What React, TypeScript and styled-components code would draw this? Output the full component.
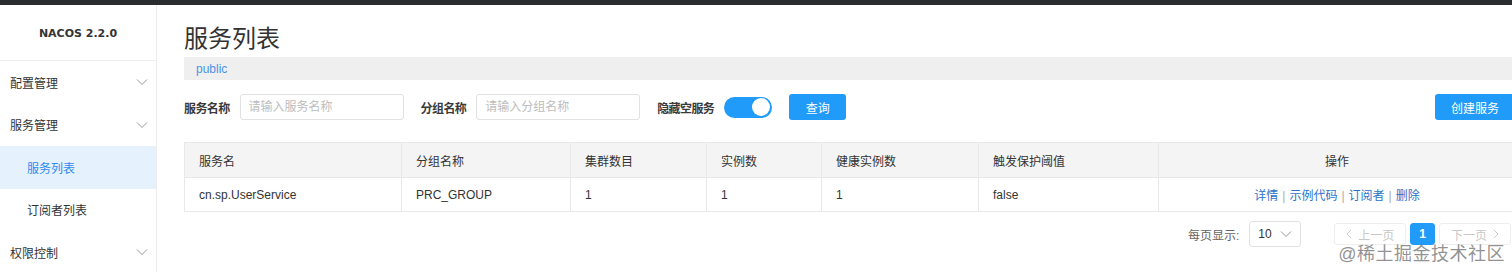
import styled, { createGlobalStyle } from 'styled-components';

const GlobalStyle = createGlobalStyle`
    html, body {
        margin : 0;
        padding : 0;
        background : #fff;
        overflow : hidden;
    }
    body {
        font-family : "Liberation Sans", "Noto Sans CJK SC", sans-serif;
        font-size : 12px;
        color : #333;
    }
    * {
        box-sizing : border-box;
    }
`;

const TopBar = styled.div`
    height : 5px;
    background : #2b2c30;
`;

const Layout = styled.div`
    display : flex;
    height : 267px;
`;

const Sidebar = styled.aside`
    width : 157px;
    flex-shrink : 0;
    border-right : 1px solid #ececec;
`;

const Logo = styled.div`
    height : 56px;
    display : flex;
    align-items : center;
    justify-content : center;
    font-family : "DejaVu Sans", sans-serif;
    font-weight : bold;
    font-size : 11px;
    color : #333;
    border-bottom : 1px solid #eee;
    padding-top : 1px;
`;

const MenuItem = styled.div<{ $sub?: boolean; $active?: boolean }>`
    height : 42.5px;
    display : flex;
    align-items : center;
    justify-content : space-between;
    padding : 0 8px 0 ${p => (p.$sub ? '27px' : '10px')};
    font-size : 12px;
    color : ${p => (p.$active ? '#2f8cf0' : '#333')};
    background : ${p => (p.$active ? '#e5f1fc' : 'transparent')};
`;

const Chevron = () => (
    <svg width="12" height="8" viewBox="0 0 12 8">
        <polyline points="1,1.5 6,6.5 11,1.5" fill="none" stroke="#999" strokeWidth="1" />
    </svg>
);

const Main = styled.main`
    width : 1358px;
    flex-shrink : 0;
    padding : 0 0 0 27px;
    position : relative;
`;

const Title = styled.h1`
    margin : 0;
    height : 52px;
    display : flex;
    align-items : center;
    font-size : 24px;
    font-weight : normal;
    color : #333;
    padding-top : 11px;
`;

const Crumb = styled.div`
    height : 23px;
    background : #efefef;
    display : flex;
    align-items : center;
    padding-left : 12px;
    color : #4a94e8;
    font-size : 12px;
`;

const FilterRow = styled.div`
    display : flex;
    align-items : center;
    margin-top : 14px;
    height : 26px;
`;

const Label = styled.span`
    font-weight : bold;
    color : #3a3a3a;
    font-size : 12px;
    letter-spacing : -0.6px;
    margin-right : 10px;
`;

const Input = styled.input`
    width : 164px;
    height : 26px;
    border : 1px solid #e2e2e2;
    border-radius : 3px;
    padding : 0 8px;
    font-size : 12px;
    font-family : inherit;
    margin-right : 17px;
    outline : none;

    &::placeholder {
        color : #bdbdbd;
    }
`;

const Switch = styled.div`
    width : 48px;
    height : 21px;
    border-radius : 11px;
    background : #209bfa;
    position : relative;
    margin-right : 17px;

    &::after {
        content : '';
        position : absolute;
        right : 2px;
        top : 1.5px;
        width : 18px;
        height : 18px;
        border-radius : 50%;
        background : #fff;
    }
`;

const Button = styled.button<{ $wide?: boolean }>`
    height : 26px;
    width : ${p => (p.$wide ? '80px' : '57px')};
    border : none;
    border-radius : 3px;
    background : #209bfa;
    color : #fff;
    font-size : 12px;
    font-family : inherit;
    padding : 0;
    margin-left : ${p => (p.$wide ? 'auto' : '0')};
`;

const Table = styled.table`
    margin-top : 22px;
    width : 1331px;
    border-collapse : collapse;
    table-layout : fixed;
    font-size : 12px;

    th, td {
        border : 1px solid #e8e8e8;
        padding : 0 14px;
        text-align : left;
        font-weight : normal;
        color : #333;
        white-space : nowrap;
    }
    th {
        height : 35px;
        background : #f4f4f5;
    }
    td {
        height : 34px;
    }
    .center {
        text-align : center;
    }
`;

const Link = styled.a`
    color : #2b73c9;
    text-decoration : none;
`;

const Sep = styled.span`
    color : #aaa;
    margin : 0 4px;
`;

const Pager = styled.div`
    display : flex;
    align-items : center;
    justify-content : flex-end;
    margin-top : 9px;
    margin-right : 4px;
    height : 26px;
`;

const PagerLabel = styled.span`
    color : #666;
    margin-right : 10px;
`;

const Select = styled.div`
    width : 52px;
    height : 26px;
    border : 1px solid #e2e2e2;
    border-radius : 3px;
    display : flex;
    align-items : center;
    justify-content : space-between;
    padding : 0 8px;
    color : #333;
    margin-right : 29px;
`;

const PageBtn = styled.div<{ $active?: boolean }>`
    height : 22px;
    padding : 0 ${p => (p.$active ? '8px' : '11px')};
    display : flex;
    align-items : center;
    gap : 6px;
    border : 1px solid ${p => (p.$active ? '#209bfa' : '#eee')};
    border-radius : 3px;
    background : ${p => (p.$active ? '#209bfa' : '#fff')};
    color : ${p => (p.$active ? '#fff' : '#c8c8c8')};
    font-weight : ${p => (p.$active ? 'bold' : 'normal')};
    margin-left : 4px;
`;

const Watermark = styled.div`
    position : absolute;
    right : 10px;
    bottom : 7px;
    font-size : 18px;
    color : rgba(110, 110, 110, 0.75);
    letter-spacing : 0.5px;
`;

const Arrow = ({ dir }: { dir: 'left' | 'right' }) => (
    <svg width="6" height="10" viewBox="0 0 6 10">
        <polyline
            points={dir === 'left' ? '5,1 1,5 5,9' : '1,1 5,5 1,9'}
            fill="none"
            stroke="#c8c8c8"
            strokeWidth="1"
        />
    </svg>
);

const columns = ['服务名', '分组名称', '集群数目', '实例数', '健康实例数', '触发保护阈值'];
const widths = [217, 169, 136, 115, 157, 180, 357];
const row = ['cn.sp.UserService', 'PRC_GROUP', '1', '1', '1', 'false'];

const App = () => {
    return (
        <>
            <GlobalStyle />
            <TopBar />
            <Layout>
                <Sidebar>
                    <Logo>NACOS 2.2.0</Logo>
                    <MenuItem>配置管理<Chevron /></MenuItem>
                    <MenuItem>服务管理<Chevron /></MenuItem>
                    <MenuItem $sub $active>服务列表</MenuItem>
                    <MenuItem $sub>订阅者列表</MenuItem>
                    <MenuItem>权限控制<Chevron /></MenuItem>
                </Sidebar>
                <Main>
                    <Title>服务列表</Title>
                    <Crumb>public</Crumb>
                    <FilterRow>
                        <Label>服务名称</Label>
                        <Input placeholder="请输入服务名称" />
                        <Label>分组名称</Label>
                        <Input placeholder="请输入分组名称" />
                        <Label>隐藏空服务</Label>
                        <Switch />
                        <Button>查询</Button>
                        <Button $wide>创建服务</Button>
                    </FilterRow>
                    <Table>
                        <colgroup>
                            {widths.map((w, i) => <col key={i} style={{ width: w }} />)}
                        </colgroup>
                        <thead>
                            <tr>
                                {columns.map(c => <th key={c}>{c}</th>)}
                                <th className="center">操作</th>
                            </tr>
                        </thead>
                        <tbody>
                            <tr>
                                {row.map((v, i) => <td key={i}>{v}</td>)}
                                <td className="center">
                                    <Link>详情</Link><Sep>|</Sep>
                                    <Link>示例代码</Link><Sep>|</Sep>
                                    <Link>订阅者</Link><Sep>|</Sep>
                                    <Link>删除</Link>
                                </td>
                            </tr>
                        </tbody>
                    </Table>
                    <Pager>
                        <PagerLabel>每页显示:</PagerLabel>
                        <Select>10<Chevron /></Select>
                        <PageBtn><Arrow dir="left" />上一页</PageBtn>
                        <PageBtn $active>1</PageBtn>
                        <PageBtn>下一页<Arrow dir="right" /></PageBtn>
                    </Pager>
                    <Watermark>@稀土掘金技术社区</Watermark>
                </Main>
            </Layout>
        </>
    );
};

export default App;
